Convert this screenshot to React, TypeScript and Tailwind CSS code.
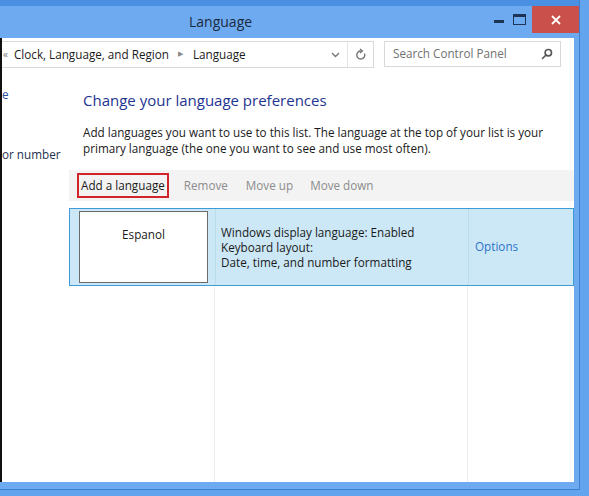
import React from 'react';

const font = 'font-["Segoe_UI","Open_Sans",sans-serif]';

function SearchIcon() {
  return (
    <svg width="12" height="12" viewBox="0 0 12 12" fill="none" stroke="#555" strokeWidth="1.6">
      <circle cx="7.3" cy="4.7" r="3.2" />
      <path d="M5 7 L1.5 10.5" strokeLinecap="round" />
    </svg>
  );
}

function RefreshIcon() {
  return (
    <svg width="12" height="13" viewBox="0 0 12 13" fill="none" stroke="#777" strokeWidth="1.4">
      <path d="M9.5 5.5 A4 4 0 1 1 6 3" />
      <path d="M5 1 L7.5 3 L5 5" fill="none" />
    </svg>
  );
}

function ChevronDown() {
  return (
    <svg width="9" height="6" viewBox="0 0 9 6" fill="none" stroke="#777" strokeWidth="1.4">
      <path d="M1 1 L4.5 4.5 L8 1" />
    </svg>
  );
}

function TitleBar() {
  return (
    <div className="flex h-[32px] items-center">
      <div className="flex-1 pb-[2px] pl-[189px] text-[14px] text-[#1b2a40]">Language</div>
      <div className="flex h-full items-start">
        <div className="mt-[14px] mr-[9px] h-[3px] w-[10px] bg-[#1d3454]" />
        <div className="mt-[8px] mr-[6px] h-[11px] w-[13px] border border-t-[3px] border-[#1d3454]" />
        <div className="flex h-[27px] w-[47px] items-center justify-center bg-[#c9504b]">
          <svg width="10" height="10" viewBox="0 0 10 10" stroke="#fff" strokeWidth="1.8">
            <path d="M1 1 L9 9 M9 1 L1 9" />
          </svg>
        </div>
      </div>
    </div>
  );
}

function AddressRow() {
  return (
    <div className="flex h-[34px] items-start pt-[3px]">
      <div className="flex h-[27px] w-[372px] items-center border border-l-0 border-[#d9d9d9] text-[11.7px] text-[#1a1a1a]">
        <span className="ml-[1px] text-[10px] text-[#777]">«</span>
        <span className="ml-[6px]">Clock, Language, and Region</span>
        <span className="ml-[9px] text-[7px] text-[#888]">▶</span>
        <span className="ml-[10px]">Language</span>
        <div className="flex-1" />
        <div className="flex h-full w-[24px] items-center justify-center">
          <ChevronDown />
        </div>
        <div className="flex h-full w-[26px] items-center justify-center border-l border-[#e3e3e3]">
          <RefreshIcon />
        </div>
      </div>
      <div className="ml-[10px] flex h-[26px] w-[177px] items-center justify-between border border-[#d9d9d9] pl-[8px] pr-[7px] text-[11.7px] text-[#707070]">
        <span>Search Control Panel</span>
        <SearchIcon />
      </div>
    </div>
  );
}

function LeftNav() {
  return (
    <div className="w-[67px] shrink-0 text-[11.7px]">
      <div className="mt-[14px] text-[#2b4ea0]">e</div>
      <div className="mt-[42px] text-[#25304f]">or number</div>
    </div>
  );
}

function Toolbar() {
  return (
    <div className="flex h-[31px] items-center bg-[#f3f3f3] text-[11.7px] text-[#8c8c8c]">
      <div className="ml-[8px] flex h-[25px] items-center border-2 border-[#d2232a] px-[2px] text-[#1a1a1a]">
        Add a language
      </div>
      <span className="ml-[15px]">Remove</span>
      <span className="ml-[18px]">Move up</span>
      <span className="ml-[17px]">Move down</span>
    </div>
  );
}

function LanguageRow() {
  return (
    <div className="flex h-[78px] border border-[#3d9bd5] bg-[#cce8f6] text-[11.7px] text-[#1a1a1a]">
      <div className="flex w-[146px] shrink-0 items-start border-r border-[#b9dcef] pl-[9px] pt-[2px]">
        <div className="flex h-[72px] w-[129px] justify-center border border-[#6b6b6b] bg-white pt-[14px]">
          Espanol
        </div>
      </div>
      <div className="flex w-[253px] shrink-0 flex-col justify-center border-r border-[#b9dcef] pl-[5px] leading-[15px]">
        <span>Windows display language: Enabled</span>
        <span>Keyboard layout:</span>
        <span>Date, time, and number formatting</span>
      </div>
      <div className="flex flex-1 items-center pl-[6px] text-[#2c74c9]">Options</div>
    </div>
  );
}

function MainPanel() {
  return (
    <div className="flex flex-1 flex-col">
      <div className="ml-[14px] mt-[18px] text-[15px] leading-[20px] text-[#1e3491]">
        Change your language preferences
      </div>
      <div className="ml-[14px] mt-[14px] text-[11.7px] leading-[16px] text-[#1a1a1a]">
        <div>Add languages you want to use to this list. The language at the top of your list is your</div>
        <div>primary language (the one you want to see and use most often).</div>
      </div>
      <div className="mt-[14px]">
        <Toolbar />
      </div>
      <div className="mt-[7px]">
        <LanguageRow />
      </div>
      <div className="flex flex-1">
        <div className="w-[146px] shrink-0 border-r border-[#ececec]" />
        <div className="w-[253px] shrink-0 border-r border-[#ececec]" />
        <div className="flex-1" />
      </div>
    </div>
  );
}

export default function App() {
  return (
    <div className={`flex h-[496px] w-[589px] flex-col overflow-hidden bg-[#62a4ee] ${font}`}>
      <div className="flex h-[490px] w-[580px] flex-col border-r border-b border-[#3f7fd0] bg-[#6eaaf0]">
        <div className="h-[6px] bg-[#4b8fe3]" />
        <TitleBar />
        <div className="flex flex-1 pr-[5px] pb-[7px]">
          <div className="flex flex-1 flex-col border-l-2 border-[#101010] bg-white">
            <AddressRow />
            <div className="flex flex-1">
              <LeftNav />
              <MainPanel />
            </div>
          </div>
        </div>
      </div>
    </div>
  );
}
